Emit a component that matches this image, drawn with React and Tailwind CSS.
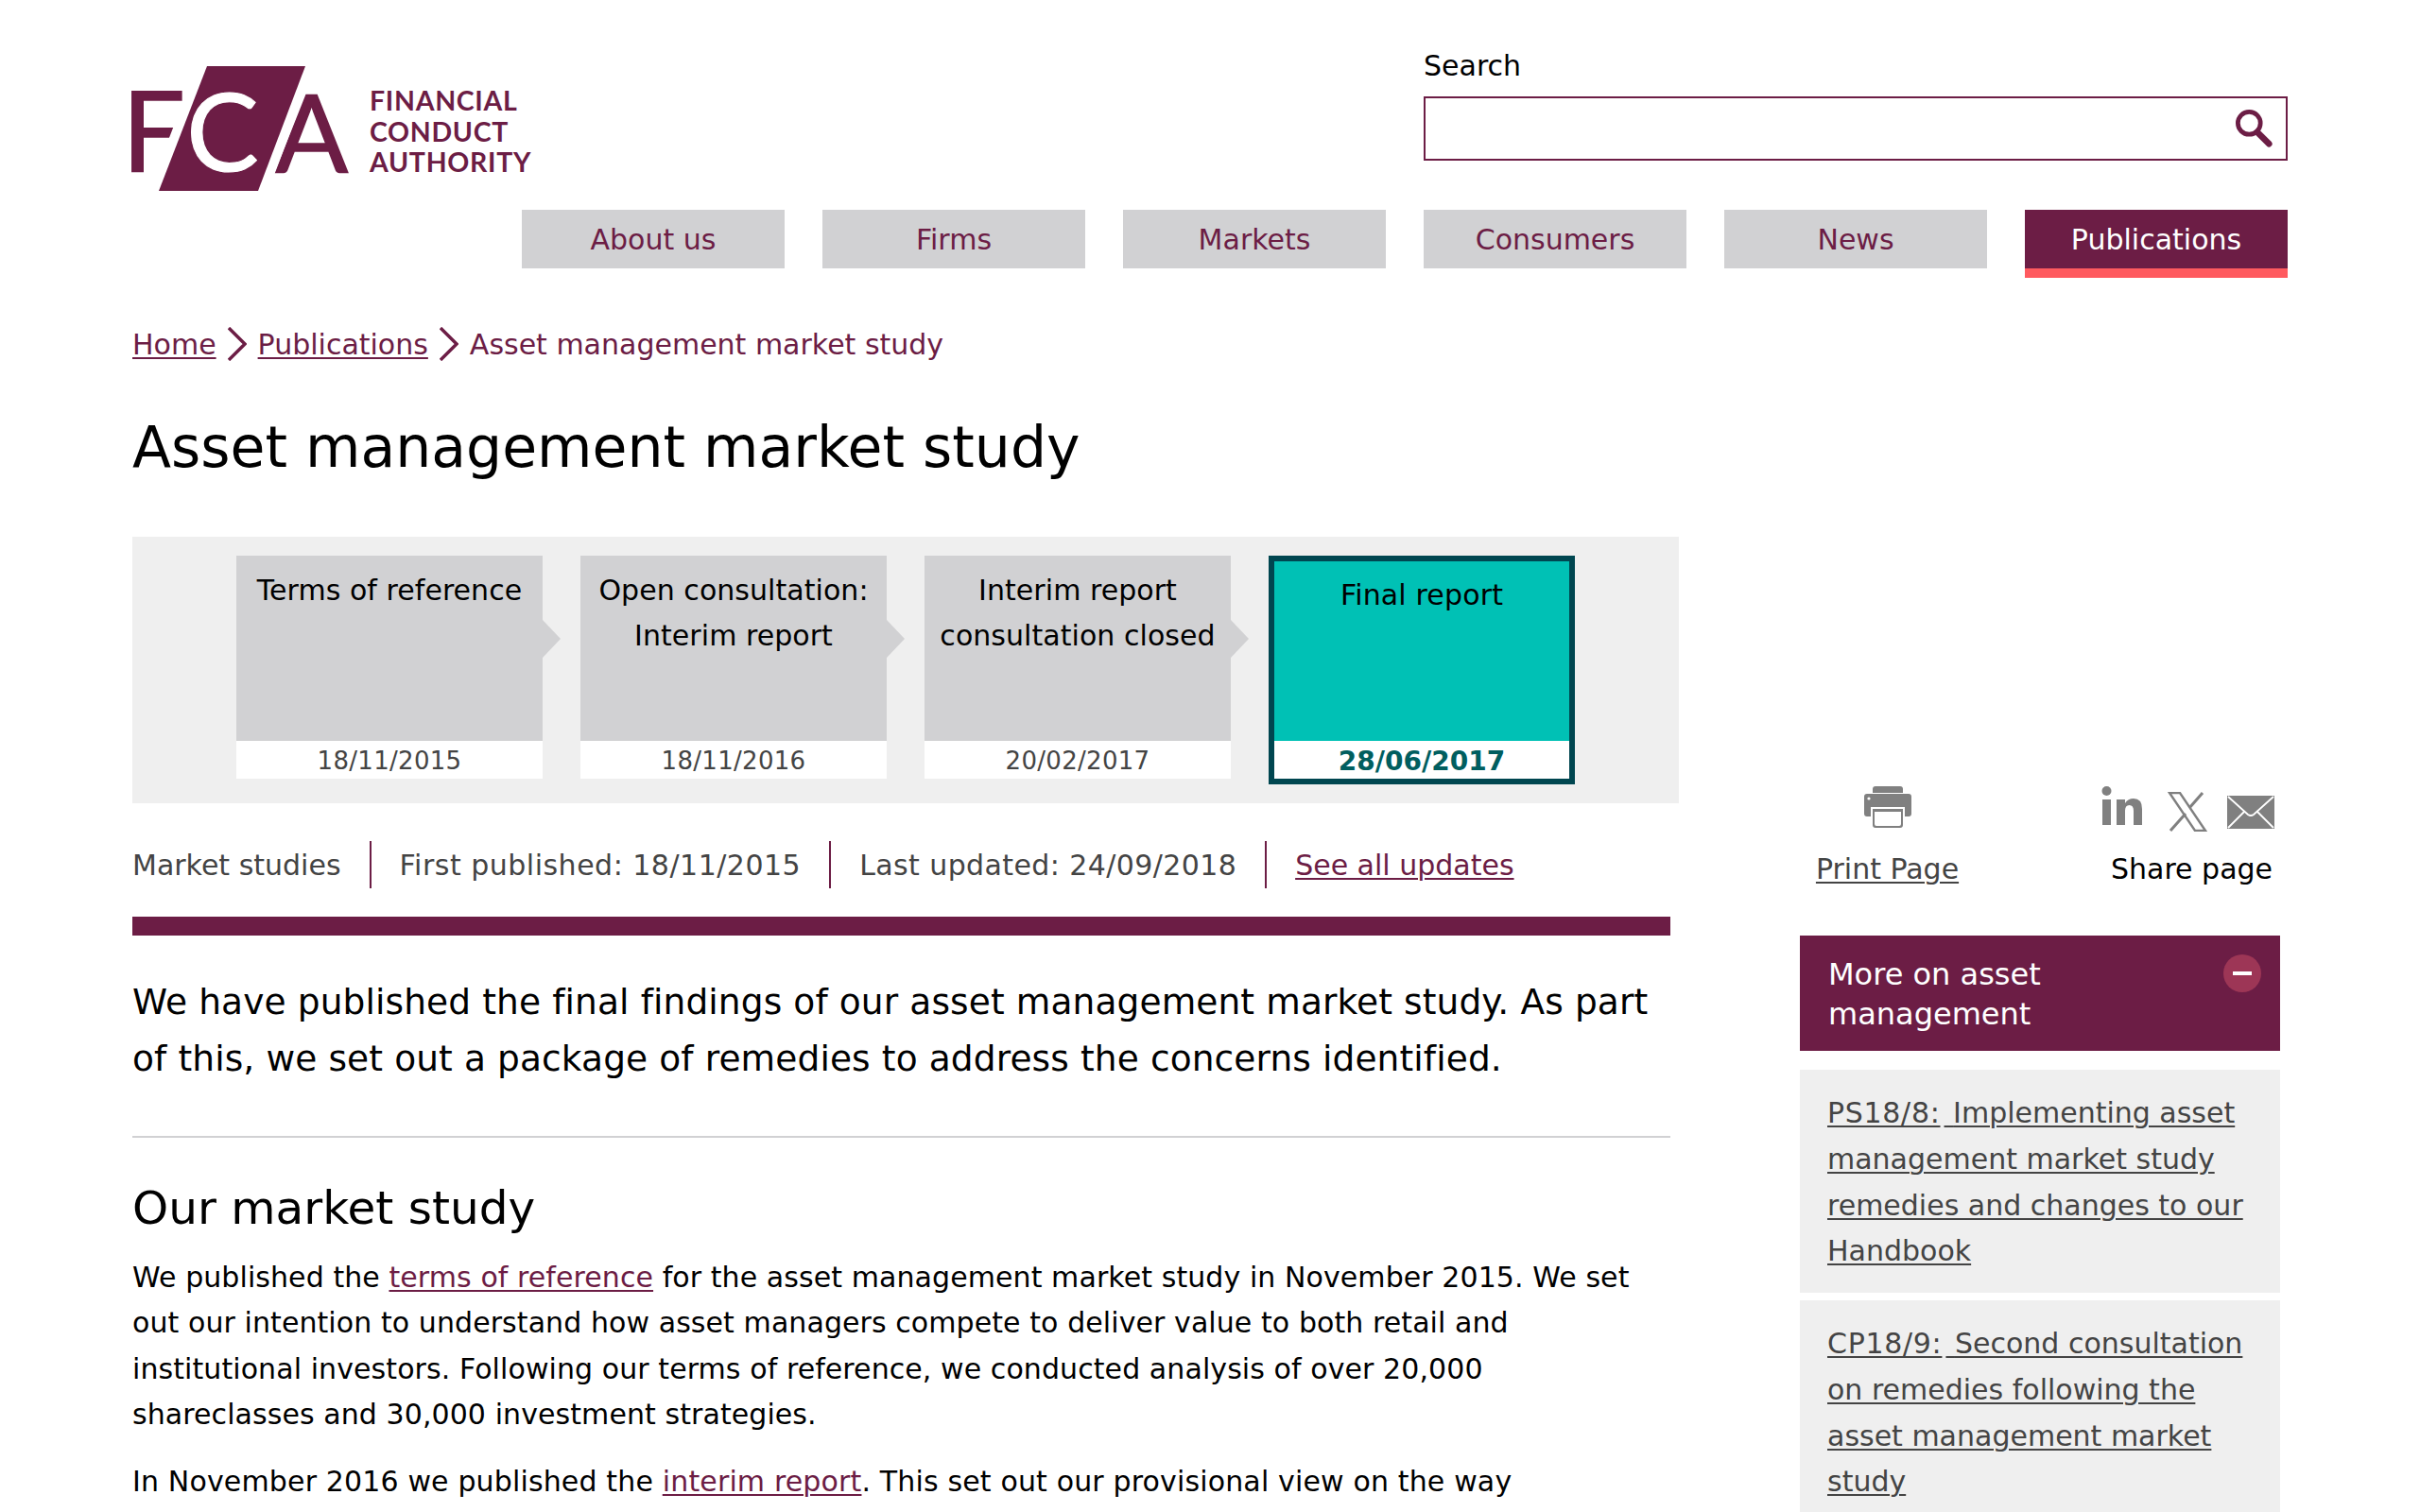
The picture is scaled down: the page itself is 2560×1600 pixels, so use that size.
const Chevron = () => (
  <svg width="20" height="36" viewBox="0 0 20 36" className="mx-[12px] shrink-0">
    <path d="M1 1 L18 18 L1 35" fill="none" stroke="#6c1d45" strokeWidth="3.4" />
  </svg>
);

const Logo = () => (
  <svg width="442" height="140" viewBox="0 0 442 140" className="block font-['Lato',sans-serif]">
    <text x="1" y="116" fontSize="118" fill="#6c1d45" stroke="#6c1d45" strokeWidth="1.5">F</text>
    <text x="163" y="116" fontSize="114" fill="#6c1d45" stroke="#6c1d45" strokeWidth="1.5">A</text>
    <polygon points="91,4 195,4 145,136 40,136" fill="#6c1d45" stroke="#fff" strokeWidth="20" paintOrder="stroke" />
    <text x="69" y="115" fontSize="115" fill="#fff" stroke="#fff" strokeWidth="1">C</text>
  </svg>
);

const Step = ({ label, date }) => (
  <div className="w-[324px] h-[236px] flex flex-col relative">
    <div className="h-[196px] bg-[#d1d1d3] pt-[13px] text-center text-[30px] leading-[48px] tracking-[0.05px] text-black relative">
      {label[0]}
      <br />
      {label[1]}
      <div className="absolute left-full top-[68px] w-[19px] h-[40px] bg-[#d1d1d3] [clip-path:polygon(0_0,100%_50%,0_100%)]" />
    </div>
    <div className="h-[40px] bg-white text-center text-[26px] leading-[43px] tracking-[0.3px] text-[#444]">{date}</div>
  </div>
);

const Link = ({ children }) => <a className="text-[#6c1d45] underline decoration-2 underline-offset-[3px]">{children}</a>;

const SideLink = ({ lead, children, h }) => (
  <div className={`bg-[#efefef] px-[29px] pt-[22px] text-[30px] leading-[48.75px] text-[#444] underline decoration-2 underline-offset-[3px] ${h}`}>
    <span className="tracking-[0.7px] mr-[4px]">{lead}</span> {children}
  </div>
);

export default function App() {
  return (
    <div className="h-screen overflow-hidden bg-white font-['DejaVu_Sans',sans-serif] text-black pl-[140px] w-[2560px]">
      <header className="relative h-[294px]">
        <div className="absolute left-[-12px] top-[66px] flex">
          <Logo />
          <div className="absolute left-[263px] top-[24px] text-[28.5px] leading-[32.5px] font-bold tracking-[0.7px] text-[#6c1d45] font-['Lato',sans-serif] whitespace-nowrap">
            FINANCIAL<br />CONDUCT<br />AUTHORITY
          </div>
        </div>
        <div className="flex flex-col items-end pr-[140px] pt-[46px]">
          <div className="w-[914px]">
            <label className="block text-[30px] leading-[48px] h-[56px]">Search</label>
            <div className="h-[68px] border-2 border-[#6c1d45] flex items-center justify-end pr-[13px]">
              <svg width="40" height="40" viewBox="0 0 42 42">
                <circle cx="15" cy="15" r="12.5" fill="none" stroke="#6c1d45" strokeWidth="5" />
                <path d="M24 25 L37 38" stroke="#6c1d45" strokeWidth="7" strokeLinecap="round" />
              </svg>
            </div>
          </div>
        </div>
        <nav className="absolute left-[412px] top-[222px] w-[1868px] flex justify-between text-[30px] text-center">
          {['About us', 'Firms', 'Markets', 'Consumers', 'News'].map((n) => (
            <div key={n} className="w-[278px] h-[62px] leading-[63px] bg-[#d1d1d3] text-[#6c1d45]">{n}</div>
          ))}
          <div className="w-[278px] h-[72px] leading-[63px] bg-[#6c1d45] text-white border-b-[10px] border-[#ff5a5f]">Publications</div>
        </nav>
      </header>

      <div className="flex">
        <main className="w-[1636px] shrink-0">
          <div className="flex items-center h-[70px] mt-[35px] text-[30px] text-[#6c1d45]">
            <Link>Home</Link>
            <Chevron />
            <Link>Publications</Link>
            <Chevron />
            <span>Asset management market study</span>
          </div>

          <h1 className="text-[60px] leading-[80px] mt-[34px] font-normal">Asset management market study</h1>

          <section className="mt-[55px] h-[282px] bg-[#efefef] pt-[20px] pl-[110px] flex gap-[40px]">
            <Step label={['Terms of reference', '']} date="18/11/2015" />
            <Step label={['Open consultation:', 'Interim report']} date="18/11/2016" />
            <Step label={['Interim report', 'consultation closed']} date="20/02/2017" />
            <div className="w-[324px] h-[242px] border-[6px] border-[#004650] bg-[#00c1b5] flex flex-col">
              <div className="h-[190px] pt-[12px] text-center text-[30px] leading-[48px] tracking-[0.15px]">Final report</div>
              <div className="h-[40px] bg-white text-center text-[28px] leading-[43px] font-bold text-[#005e5f]">28/06/2017</div>
            </div>
          </section>

          <div className="flex items-center h-[50px] mt-[40px] text-[30px] text-[#444]">
            <span>Market studies</span>
            <i className="w-[2px] h-[50px] bg-[#6c1d45] mx-[30px]" />
            <span className="tracking-[0.5px]">First published: 18/11/2015</span>
            <i className="w-[2px] h-[50px] bg-[#6c1d45] mx-[30px]" />
            <span className="tracking-[0.4px]">Last updated: 24/09/2018</span>
            <i className="w-[2px] h-[50px] bg-[#6c1d45] mx-[30px]" />
            <Link>See all updates</Link>
          </div>

          <div className="w-[1627px] h-[20px] bg-[#6c1d45] mt-[30px]" />

          <p className="w-[1627px] text-[37.5px] leading-[60px] tracking-[0.12px] mt-[40px] pb-[52px] border-b-2 border-[#d1d1d3]">
            We have published the final findings of our asset management market study. As part of this, we set out a package of remedies to address the concerns identified.
          </p>

          <h2 className="text-[48.5px] leading-[60px] mt-[44px] font-normal">Our market study</h2>

          <p className="w-[1600px] text-[30px] leading-[48.4px] tracking-[0.08px] mt-[20px]">
            We published the <Link>terms of reference</Link> for the asset management market study in November 2015. We set out our intention to understand how asset managers compete to deliver value to both retail and institutional investors. Following our terms of reference, we conducted analysis of over 20,000 shareclasses and 30,000 investment strategies.
          </p>
          <p className="w-[1600px] text-[30px] leading-[48.4px] tracking-[0.15px] mt-[22px]">
            In November 2016 we published the <Link>interim report</Link>. This set out our provisional view on the way
          </p>
        </main>

        <aside className="w-[508px] ml-[128px] shrink-0 pt-[538px]">
          <div className="flex justify-between h-[114px]">
            <div className="w-[151px] ml-[17px] flex flex-col items-center">
              <svg width="50" height="44" viewBox="0 0 50 44" fill="#808080" className="shrink-0">
                <path d="M9 7 V3 Q9 0 12 0 H38 Q41 0 41 3 V7 Z" />
                <path d="M3 8 H47 Q50 8 50 11 V29 Q50 32 47 32 H43 V22 H7 V32 H3 Q0 32 0 29 V11 Q0 8 3 8 Z" />
                <path d="M9 24 H41 V41 Q41 44 38 44 H12 Q9 44 9 41 Z M11 27 V40 Q11 42 13 42 H37 Q39 42 39 40 V27 Z" fillRule="evenodd" />
                <circle cx="5" cy="13" r="1.6" fill="#fff" />
              </svg>
              <a className="mt-[20px] text-[30px] leading-[48px] text-[#444] underline decoration-2 underline-offset-[3px] whitespace-nowrap">Print Page</a>
            </div>
            <div className="w-[189px]">
              <div className="h-[64px] relative">
                <svg width="43" height="42" viewBox="0 0 43 42" fill="#808080" className="absolute left-0 top-0">
                  <circle cx="5.5" cy="5" r="5" />
                  <rect x="1" y="14" width="9" height="27" />
                  <path d="M16 14 H25 V18 Q28 13 34 13 Q43 13 43 24 V41 H34 V26 Q34 20 29.5 20 Q25 20 25 26 V41 H16 Z" />
                </svg>
                <svg width="42" height="42" viewBox="0 0 42 42" className="absolute left-[70px] top-[6px]">
                  <path d="M2 1 H13 L40 41 H29 Z" fill="none" stroke="#808080" strokeWidth="2.4" />
                  <path d="M37 1 L23 17 M19 23 L3 41" stroke="#808080" strokeWidth="3" />
                </svg>
                <svg width="50" height="35" viewBox="0 0 50 35" className="absolute left-[133px] top-[10px]">
                  <rect width="50" height="35" fill="#808080" />
                  <path d="M1 1 L22 20 Q25 22 28 20 L49 1 M1 34 L18 17 M49 34 L32 17" fill="none" stroke="#fff" strokeWidth="1.8" />
                </svg>
              </div>
              <div className="ml-[10px] text-[30px] leading-[48px] text-black whitespace-nowrap">Share page</div>
            </div>
          </div>

          <div className="mt-[44px] h-[122px] bg-[#6c1d45] relative pl-[30px] pt-[20px] text-[32px] leading-[42px] text-white">
            More on asset
            <br />
            management
            <div className="absolute right-[20px] top-[20px] w-[40px] h-[40px] rounded-full bg-[#9d3656] flex items-center justify-center">
              <i className="w-[20px] h-[4px] bg-white" />
            </div>
          </div>

          <SideLink lead="PS18/8:" h="mt-[20px] h-[236px]">
            Implementing asset management market study remedies and changes to our Handbook
          </SideLink>
          <SideLink lead="CP18/9:" h="mt-[8px] h-[300px]">
            Second consultation on remedies following the asset management market study
          </SideLink>
        </aside>
      </div>
    </div>
  );
}
